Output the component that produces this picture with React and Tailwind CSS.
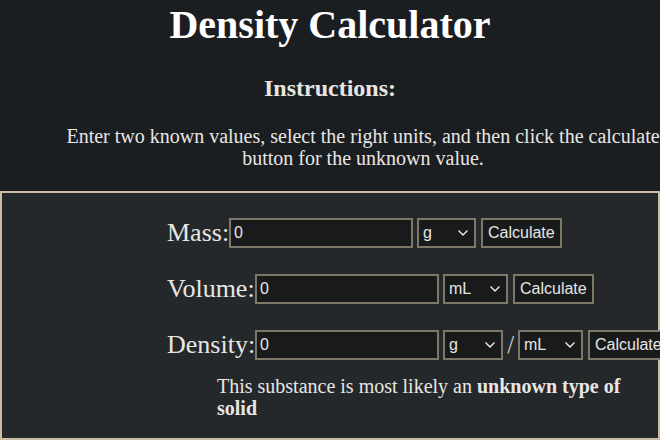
import React, { useState } from 'react';

function Chevron() {
  return (
    <svg className="pointer-events-none absolute right-[8px] top-1/2 -translate-y-1/2" width="10" height="6" viewBox="0 0 10 6" fill="none">
      <path d="M1 1l4 4 4-4" stroke="#e8e6e3" strokeWidth="1.5" strokeLinecap="round" strokeLinejoin="round" />
    </svg>
  );
}

function UnitSelect({ value, options, onChange, width }) {
  return (
    <div className={`relative h-[30px] shrink-0 ${width}`}>
      <select
        value={value}
        onChange={e => onChange(e.target.value)}
        className="h-full w-full appearance-none border-2 border-[#7f7768] bg-[#181a1b] pl-[4px] text-[16px] text-[#e8e6e3] outline-none font-['Liberation_Sans',Arial,sans-serif]"
      >
        {options.map(o => <option key={o} value={o}>{o}</option>)}
      </select>
      <Chevron />
    </div>
  );
}

function NumberInput({ value, onChange }) {
  return (
    <input
      type="text"
      value={value}
      onChange={e => onChange(e.target.value)}
      className="h-[30px] w-[184px] shrink-0 border-2 border-[#7f7768] bg-[#181a1b] px-[3px] text-[16px] text-[#e8e6e3] outline-none font-['Liberation_Sans',Arial,sans-serif]"
    />
  );
}

function CalcButton({ onClick }) {
  return (
    <button
      onClick={onClick}
      className="h-[30px] shrink-0 whitespace-nowrap border-2 border-[#7f7768] bg-[#181a1b] px-[5px] text-[16px] text-[#e8e6e3] font-['Liberation_Sans',Arial,sans-serif]"
    >
      Calculate
    </button>
  );
}

export default function App() {
  const [mass, setMass] = useState('0');
  const [volume, setVolume] = useState('0');
  const [density, setDensity] = useState('0');
  const [massUnit, setMassUnit] = useState('g');
  const [volUnit, setVolUnit] = useState('mL');
  const [dMassUnit, setDMassUnit] = useState('g');
  const [dVolUnit, setDVolUnit] = useState('mL');

  const calcMass = () => setMass(String((parseFloat(density) || 0) * (parseFloat(volume) || 0)));
  const calcVolume = () => {
    const d = parseFloat(density) || 0;
    setVolume(d ? String((parseFloat(mass) || 0) / d) : '0');
  };
  const calcDensity = () => {
    const v = parseFloat(volume) || 0;
    setDensity(v ? String((parseFloat(mass) || 0) / v) : '0');
  };

  return (
    <div className="h-[440px] w-[660px] overflow-hidden bg-[#1b1e21] text-[#e8e6e3] font-['Liberation_Serif','Times_New_Roman',serif]">
      <h1 className="pt-[2px] text-center text-[40px] font-bold leading-[46px] text-white">Density Calculator</h1>
      <h2 className="mt-[27px] text-center text-[24px] font-bold leading-[26px]">Instructions:</h2>
      <p className="ml-[63px] mt-[24px] w-[600px] text-center text-[20px] leading-[22px]">
        Enter two known values, select the right units, and then click the calculate button for the unknown value.
      </p>

      <div className="mt-[22px] h-[249px] border-2 border-[#cbbd9f] bg-[#25282b] pl-[165px] pt-[25px]">
        <div className="flex flex-col gap-[26px]">
          <div className="flex h-[30px] items-center">
            <span className="w-[62px] shrink-0 whitespace-nowrap text-[26px] leading-[30px]">Mass:</span>
            <NumberInput value={mass} onChange={setMass} />
            <div className="ml-[4px] shrink-0">
              <UnitSelect value={massUnit} options={['g', 'kg', 'mg']} onChange={setMassUnit} width="w-[59px]" />
            </div>
            <div className="ml-[5px] shrink-0"><CalcButton onClick={calcMass} /></div>
          </div>

          <div className="flex h-[30px] items-center">
            <span className="w-[88px] shrink-0 whitespace-nowrap text-[26px] leading-[30px]">Volume:</span>
            <NumberInput value={volume} onChange={setVolume} />
            <div className="ml-[4px] shrink-0">
              <UnitSelect value={volUnit} options={['mL', 'L', 'cm³']} onChange={setVolUnit} width="w-[65px]" />
            </div>
            <div className="ml-[5px] shrink-0"><CalcButton onClick={calcVolume} /></div>
          </div>

          <div className="flex h-[30px] items-center">
            <span className="w-[88px] shrink-0 whitespace-nowrap text-[26px] leading-[30px]">Density:</span>
            <NumberInput value={density} onChange={setDensity} />
            <div className="ml-[4px] shrink-0">
              <UnitSelect value={dMassUnit} options={['g', 'kg', 'mg']} onChange={setDMassUnit} width="w-[60px]" />
            </div>
            <span className="mx-[4px] w-[7px] shrink-0 text-center text-[22px] font-light leading-[30px] text-[#d8d4cf] font-['DejaVu_Sans',sans-serif]">/</span>
            <UnitSelect value={dVolUnit} options={['mL', 'L', 'cm³']} onChange={setDVolUnit} width="w-[65px]" />
            <div className="ml-[5px] shrink-0"><CalcButton onClick={calcDensity} /></div>
          </div>
        </div>

        <p className="ml-[50px] mt-[15px] w-[420px] text-[20px] leading-[22px]">
          This substance is most likely an <b>unknown type of solid</b>
        </p>
      </div>
    </div>
  );
}
